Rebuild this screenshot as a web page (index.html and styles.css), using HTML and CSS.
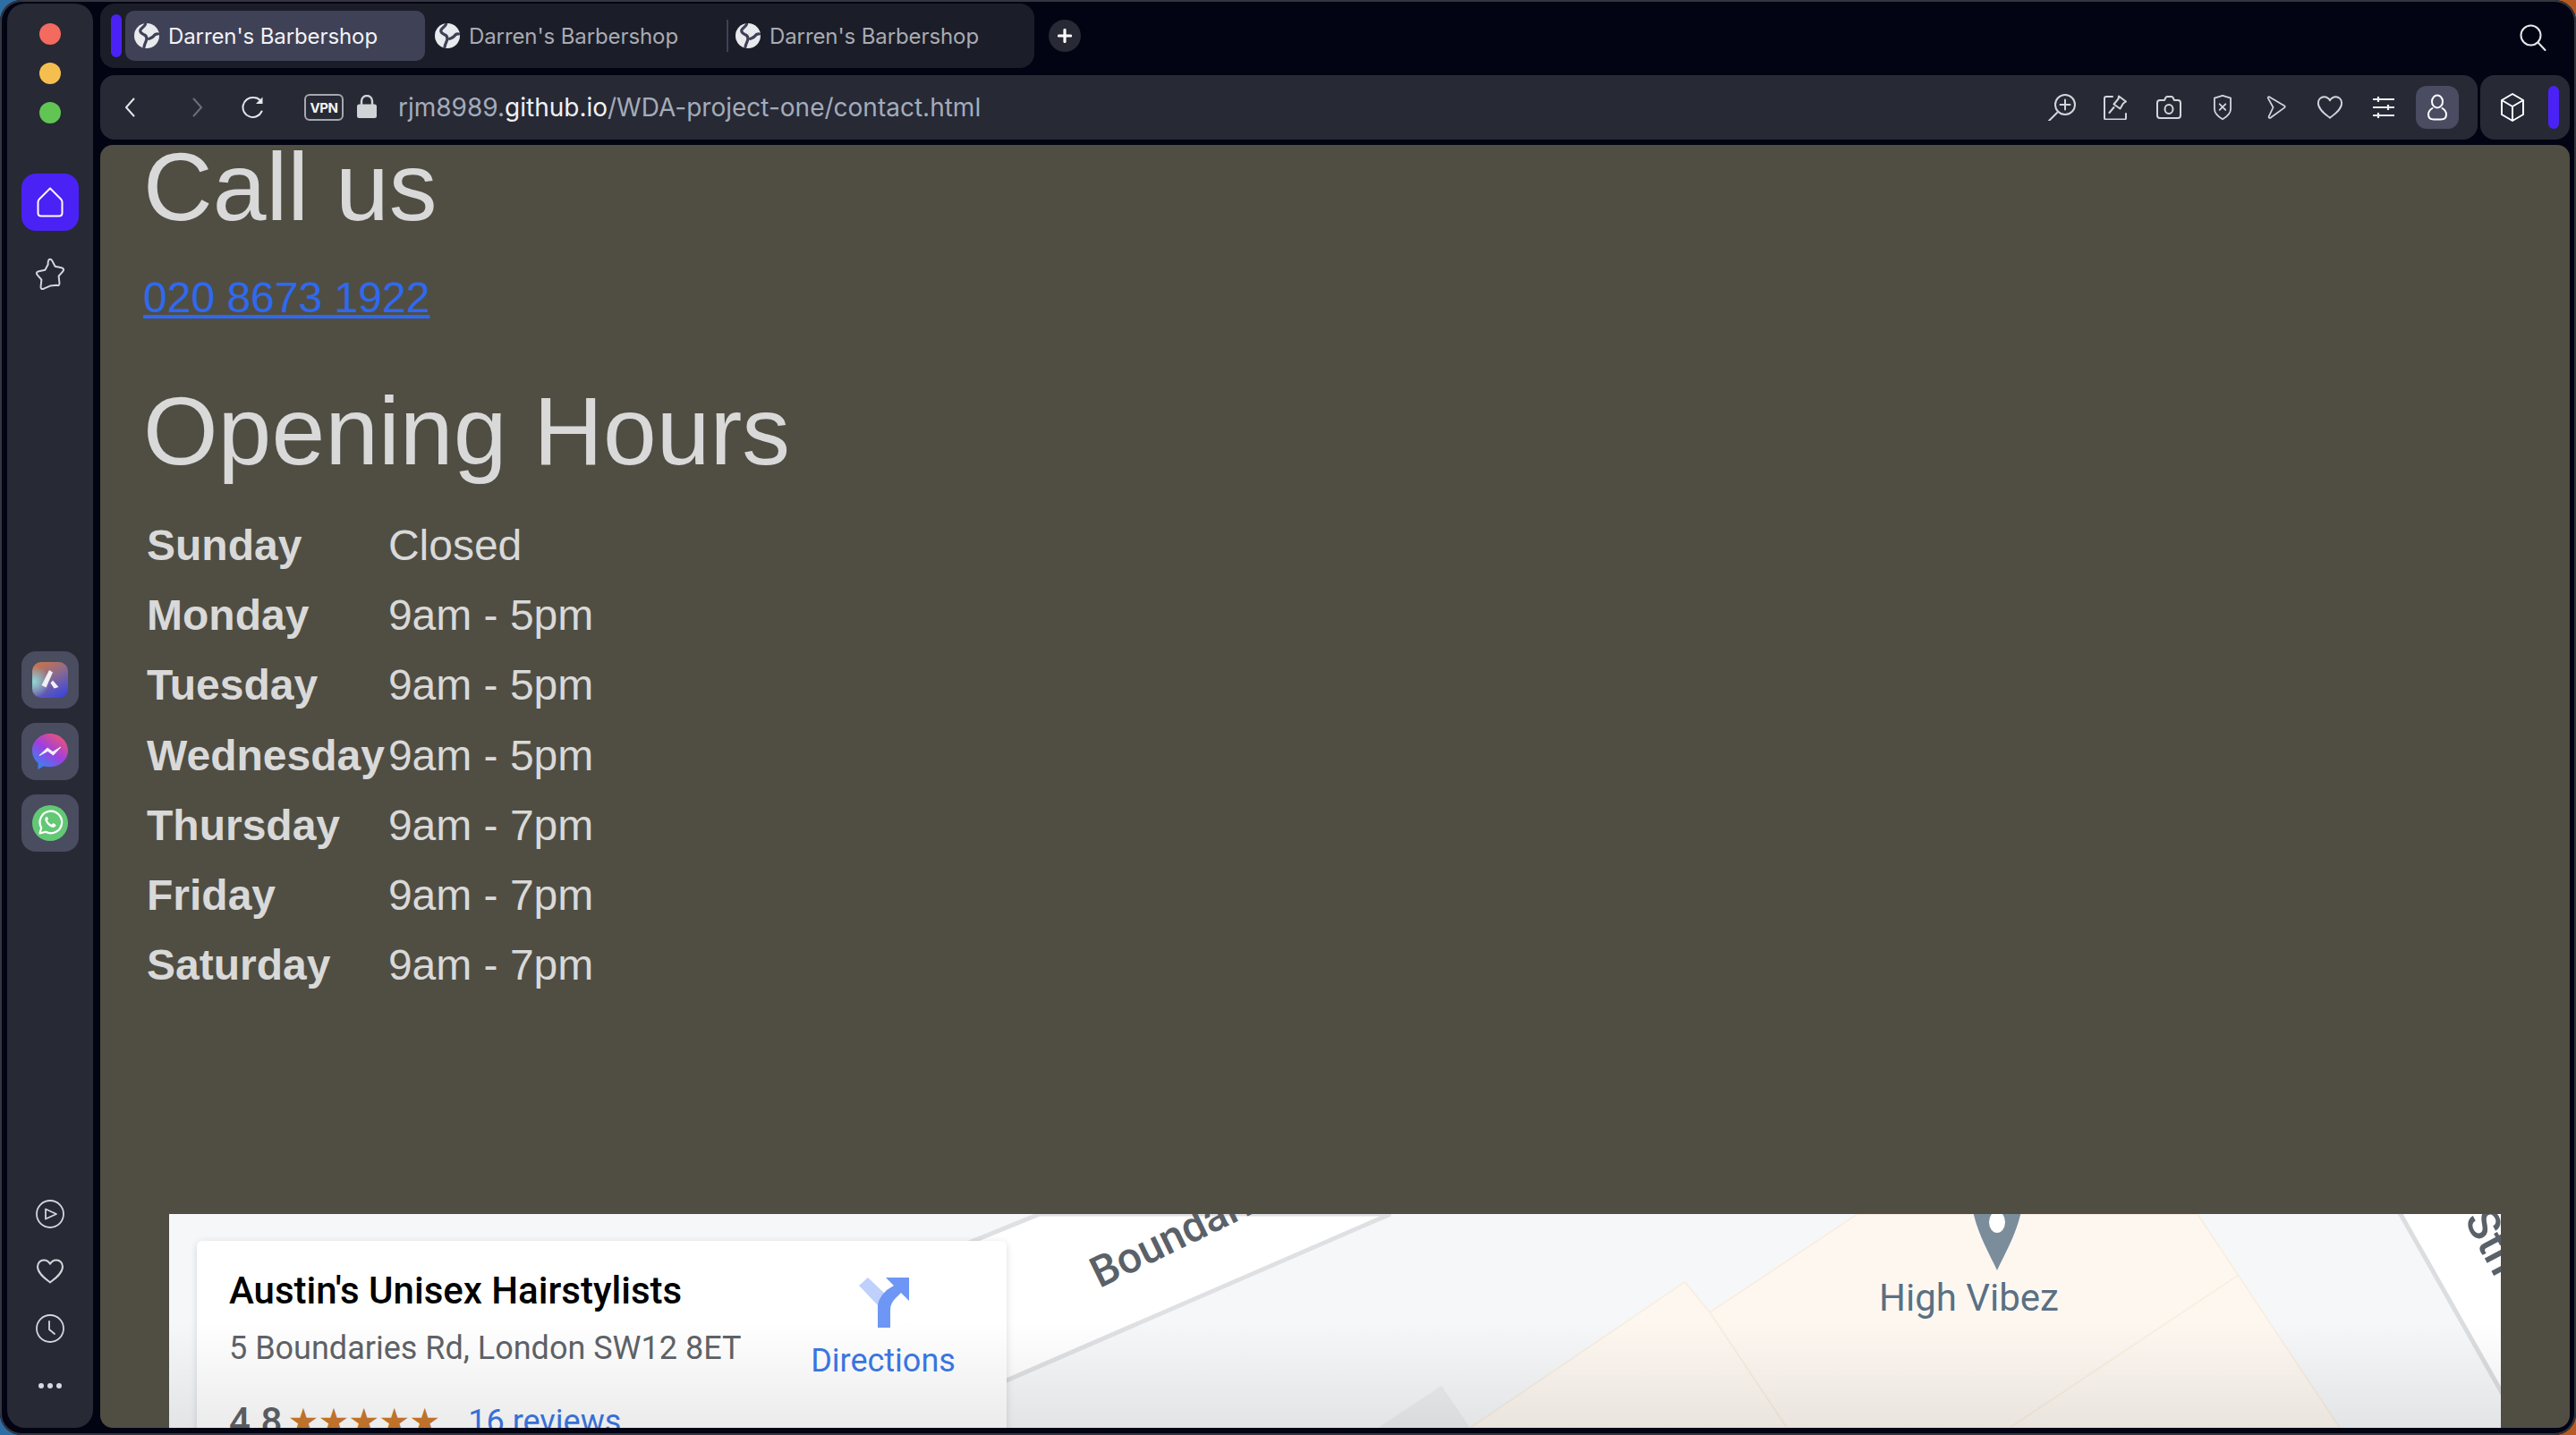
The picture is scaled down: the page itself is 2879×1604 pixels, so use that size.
FILE: index.html
```
<!DOCTYPE html>
<html lang="en">
<head>
<meta charset="utf-8">
<title>Darren's Barbershop</title>
<link rel="stylesheet" href="styles.css">
</head>
<body>
<svg class="defs" width="0" height="0" aria-hidden="true">
  <symbol id="globe" viewBox="0 0 28 28">
    <circle cx="14" cy="14" r="14" fill="#e9eaed"/>
    <path d="M12.500 1C11.500 4 7.500 5 6.800 8c-.6 3 2.700 4 4.700 5 2.200 1.200 2.700 3 2.200 5.500-.5 2.500-2 4-2.700 8" fill="none" stroke="#3f4156" stroke-width="3.200" stroke-linecap="round"/>
    <path d="M26.500 12c-2.500-.5-3.800.8-5 2.500-1.300 1.800-3.500 2-5 2.800" fill="none" stroke="#3f4156" stroke-width="3.200" stroke-linecap="round"/>
  </symbol>
  <symbol id="heart" viewBox="0 0 32 30">
    <path d="M16 27.500C11 23.500 2 17.500 2 9.800 2 5.400 5.300 2.500 9 2.500c3 0 5.500 1.600 7 4.300 1.500-2.700 4-4.300 7-4.300 3.700 0 7 2.900 7 7.300 0 7.700-9 13.700-14 17.700z" fill="none" stroke="currentColor" stroke-width="2" stroke-linejoin="round"/>
  </symbol>
</svg>

<div class="window">
  <aside class="sidebar">
    <div class="lights">
      <span class="light light-red"></span>
      <span class="light light-yellow"></span>
      <span class="light light-green"></span>
    </div>
    <div class="side-nav">
      <div class="home-btn">
        <svg width="30" height="34" viewBox="0 0 30 34"><path d="M15 1.500 27 13.500c1 1 1.500 2 1.500 3.300V29c0 2.200-1.500 3.500-3.500 3.500H5c-2 0-3.500-1.300-3.500-3.500V16.800c0-1.300.5-2.300 1.500-3.300z" fill="none" stroke="#fff" stroke-width="2" stroke-linejoin="round"/></svg>
      </div>
      <svg class="star" width="36" height="36" viewBox="0 0 36 36"><path d="M18 1.800c1 0 1.700.7 2.300 1.800l3.300 6.100 7 1.500c2.600.6 3.200 2.200 1.600 4.100l-4.600 5.400.8 7.300c.3 2.500-1.100 3.600-3.300 2.700L18 31.600l-7.100 3.100c-2.200.9-3.600-.2-3.300-2.700l.8-7.300-4.600-5.400c-1.600-1.900-1-3.500 1.600-4.100l7-1.500 3.300-6.100C15.300 2.500 17 1.800 18 1.800z" fill="none" stroke="#d4d5da" stroke-width="2" stroke-linejoin="round"/></svg>
    </div>
    <div class="side-apps">
      <div class="app-btn">
        <svg width="40" height="40" viewBox="0 0 40 40">
          <defs>
            <linearGradient id="ariaA" x1="0.2" y1="0" x2="0.7" y2="1"><stop offset="0" stop-color="#c9744a"/><stop offset=".45" stop-color="#8a6a8e"/><stop offset="1" stop-color="#3f48d8"/></linearGradient>
            <radialGradient id="ariaB" cx="0.05" cy="0.55" r="0.45"><stop offset="0" stop-color="#8fd8d8"/><stop offset="1" stop-color="#8fd8d8" stop-opacity="0"/></radialGradient>
          </defs>
          <rect width="40" height="40" rx="10" fill="url(#ariaA)"/>
          <rect width="40" height="40" rx="10" fill="url(#ariaB)"/>
          <path d="M19 9l4 2.500-7.500 17-5-2.500zM23 20.500l6.500 7.500-5 1.500-4-6z" fill="#f1f0f4"/>
        </svg>
      </div>
      <div class="app-btn">
        <svg width="40" height="40" viewBox="0 0 40 40">
          <defs><linearGradient id="msgr" x1="0.15" y1="1" x2="0.85" y2="0"><stop offset="0" stop-color="#2a8cf5"/><stop offset=".5" stop-color="#9d3fe0"/><stop offset="1" stop-color="#f2566c"/></linearGradient></defs>
          <path d="M20 0C9 0 0 8 0 19c0 5.600 2.400 10.500 6.500 13.900V40l6.500-3.700c2.200.6 4.500.9 7 .9 11 0 20-8 20-18.200S31 0 20 0z" fill="url(#msgr)"/>
          <path d="M8 24.500l9-8.500 6 4.500 9-5.500-8.500 9-6-4.500z" fill="#f2f2f6" stroke="#f2f2f6" stroke-linejoin="round"/>
        </svg>
      </div>
      <div class="app-btn">
        <svg width="40" height="40" viewBox="0 0 40 40">
          <circle cx="20" cy="20" r="20" fill="#62c873"/>
          <path d="M8.500 31.500l1.700-6.300a12.300 12.300 0 1 1 4.700 4.600z" fill="none" stroke="#fff" stroke-width="2.200" stroke-linejoin="round"/>
          <path d="M16 13c-1.200.4-2 2-1.500 3.800 1 3.500 4 6.800 7.800 8 1.800.5 3.500-.3 4-1.700.2-.7.200-1.200 0-1.400l-3-1.600-1.400 1.600c-2.400-1-4-2.600-5-4.800l1.200-1.300-1.300-2.600z" fill="#fff"/>
        </svg>
      </div>
    </div>
    <div class="side-tools">
      <svg width="32" height="32" viewBox="0 0 32 32"><circle cx="16" cy="16" r="15" fill="none" stroke="#d4d5da" stroke-width="1.800"/><path d="M11 10.500v11L23 16z" fill="none" stroke="#d4d5da" stroke-width="1.800" stroke-linejoin="round"/></svg>
      <svg class="tool-heart" width="32" height="30"><use href="#heart"/></svg>
      <svg width="32" height="32" viewBox="0 0 32 32"><circle cx="16" cy="16" r="15" fill="none" stroke="#d4d5da" stroke-width="1.800"/><path d="M15 8v9l6 5" fill="none" stroke="#d4d5da" stroke-width="1.800" stroke-linecap="round"/></svg>
      <div class="dots"><span></span><span></span><span></span></div>
    </div>
  </aside>

  <div class="main">
    <div class="tab-row">
      <div class="tab-strip">
        <span class="accent"></span>
        <div class="tab tab-active"><svg class="globe" width="28" height="28"><use href="#globe"/></svg><span>Darren's Barbershop</span></div>
        <div class="tab"><svg class="globe" width="28" height="28"><use href="#globe"/></svg><span>Darren's Barbershop</span></div>
        <div class="tab tab-sep"><svg class="globe" width="28" height="28"><use href="#globe"/></svg><span>Darren's Barbershop</span></div>
      </div>
      <div class="new-tab"><svg width="16" height="16" viewBox="0 0 16 16"><path d="M8 1.500v13M1.500 8h13" stroke="#fff" stroke-width="3.200" stroke-linecap="round"/></svg></div>
      <svg class="search" width="30" height="30" viewBox="0 0 30 30"><circle cx="12.500" cy="12.500" r="11" fill="none" stroke="#e6e7ea" stroke-width="2"/><path d="M20.500 20.500 28.500 29" stroke="#e6e7ea" stroke-width="2" stroke-linecap="round"/></svg>
    </div>

    <div class="bar-row">
      <div class="address">
        <svg class="nav-back" width="12" height="22" viewBox="0 0 12 22"><path d="M10.500 1.500 2 11l8.500 9.500" fill="none" stroke="#e4e5e8" stroke-width="2" stroke-linecap="round" stroke-linejoin="round"/></svg>
        <svg class="nav-fwd" width="12" height="22" viewBox="0 0 12 22"><path d="M1.500 1.500 10 11l-8.500 9.500" fill="none" stroke="#6d6e76" stroke-width="2" stroke-linecap="round" stroke-linejoin="round"/></svg>
        <svg class="nav-reload" width="26" height="26" viewBox="0 0 26 26"><path d="M22.500 17.500A11 11 0 1 1 13.500 2c3 0 5.500 1.200 7.500 3.200" fill="none" stroke="#e6e7ea" stroke-width="2" stroke-linecap="round"/><path d="M23.500 1.500v7.500H16z" fill="#e6e7ea"/></svg>
        <span class="vpn">VPN</span>
        <svg class="lock" width="22" height="26" viewBox="0 0 22 26"><path d="M5 12V7a6 6 0 0 1 12 0v5" fill="none" stroke="#d2d3d6" stroke-width="2.400"/><rect y="10.500" width="22" height="15.500" rx="2.500" fill="#d2d3d6"/></svg>
        <div class="url"><span class="url-dim">rjm8989.</span><span class="url-host">github.io</span><span class="url-dim">/WDA-project-one/contact.html</span></div>
        <div class="bar-icons">
          <svg width="34" height="30" viewBox="0 0 34 30"><circle cx="21" cy="12" r="11" fill="none" stroke="#d4d5da" stroke-width="2"/><path d="M21 6.500v11M15.500 12h11" stroke="#d4d5da" stroke-width="2" stroke-linecap="round"/><path d="M12 21 3 30" stroke="#d4d5da" stroke-width="2" stroke-linecap="round"/></svg>
          <svg width="26" height="28" viewBox="0 0 26 28"><path d="M10 2H3C2 2 1 3 1 4v22c0 1 1 1.500 2 1.500h20c1 0 2-.5 2-1.500v-5" fill="none" stroke="#d4d5da" stroke-width="2" stroke-linecap="round"/><path d="M17 1.500l8 6-3 2-3.500 6-7-5 5-6zM11.500 14 6.500 20" fill="none" stroke="#d4d5da" stroke-width="2" stroke-linejoin="round" stroke-linecap="round"/></svg>
          <svg width="28" height="26" viewBox="0 0 28 26"><path d="M9 5l1.500-3c.3-.6.8-1 1.500-1h5c.7 0 1.200.4 1.500 1L20 5h4c2 0 3 1.300 3 3v14c0 2-1 3-3 3H4c-2 0-3-1-3-3V8c0-1.700 1-3 3-3z" fill="none" stroke="#d4d5da" stroke-width="2" stroke-linejoin="round"/><ellipse cx="14" cy="15" rx="4.500" ry="5" fill="none" stroke="#d4d5da" stroke-width="2"/></svg>
          <svg width="24" height="28" viewBox="0 0 24 34"><path d="M12 1l11 3.500V19c0 6-5 10.500-11 14C6 29.500 1 25 1 19V4.500z" fill="none" stroke="#d4d5da" stroke-width="2.200" stroke-linejoin="round"/><path d="M8 12.500l8 8M16 12.500l-8 8" stroke="#d4d5da" stroke-width="2.200" stroke-linecap="round"/></svg>
          <svg width="24" height="26" viewBox="0 0 24 30"><path d="M3 1.500 22.500 13c1 .7 1 1.700 0 2.400L4.500 28.500c-1.400.7-2.600-.4-2-1.700L8 15 1.500 3.300C1 2 2 1 3 1.500z" fill="none" stroke="#d4d5da" stroke-width="2" stroke-linejoin="round"/></svg>
          <svg class="bar-heart" width="30" height="30"><use href="#heart"/></svg>
          <svg width="26" height="24" viewBox="0 0 26 24"><path d="M1 3h24M1 12h24M1 21h24" stroke="#f0f0f2" stroke-width="2.200"/><path d="M7 0v6M18 9v6M7 18v6" stroke="#f0f0f2" stroke-width="2.200"/></svg>
          <div class="user-btn"><svg width="22" height="30" viewBox="0 0 22 30"><ellipse cx="11" cy="8.500" rx="6" ry="7" fill="none" stroke="#fff" stroke-width="2"/><path d="M5.500 16C3 17.500 1 19.500 1 23c0 4 3 5.500 6 5.500h8c3 0 6-1.500 6-5.500 0-3.500-2-5.500-4.500-7" fill="none" stroke="#fff" stroke-width="2" stroke-linecap="round"/></svg></div>
        </div>
      </div>
      <div class="ext-box">
        <svg width="26" height="32" viewBox="0 0 26 32"><path d="M13 1l12 7v16l-12 7-12-7V8zM1 8l12 7 12-7M13 15v16" fill="none" stroke="#fff" stroke-width="2" stroke-linejoin="round"/></svg>
        <span class="ext-accent"></span>
      </div>
    </div>

    <main class="content">
      <h1 class="call">Call us</h1>
      <p class="phone"><a href="#">020 8673 1922</a></p>
      <h2 class="hours-title">Opening Hours</h2>
      <table class="hours">
        <tr><th>Sunday</th><td>Closed</td></tr>
        <tr><th>Monday</th><td>9am - 5pm</td></tr>
        <tr><th>Tuesday</th><td>9am - 5pm</td></tr>
        <tr><th>Wednesday</th><td>9am - 5pm</td></tr>
        <tr><th>Thursday</th><td>9am - 7pm</td></tr>
        <tr><th>Friday</th><td>9am - 7pm</td></tr>
        <tr><th>Saturday</th><td>9am - 7pm</td></tr>
      </table>

      <section class="map">
        <svg class="map-art" width="2606" height="450" viewBox="0 0 2606 450">
          <polygon points="1887,0 2267,0 2426,239 1808,239 1722,110" fill="#fdf7f0" stroke="#f9ecdd" stroke-width="1.500"/>
          <polygon points="1694,76 1722,110 1808,239 1454,239" fill="#fdf7f0" stroke="#f9ecdd" stroke-width="1.500"/>
          <path d="M2313 68 2057 239" fill="none" stroke="#f9ecdd" stroke-width="1.500"/>
          <polygon points="1422,192 1351,239 1454,239" fill="#ecedee"/>
          <polygon points="973,0 1365,0 500,375 500,192" fill="#fff" stroke="#dfe0e3" stroke-width="5"/>
          <polygon points="2491,-5 2640,-5 2640,260 2630,240" fill="#fff" stroke="#dcdde0" stroke-width="5"/>
          <path d="M2012 -40h62c0 48-18 75-31 103-13-28-31-55-31-103z" fill="#7b8d9b"/>
          <ellipse cx="2043" cy="9" rx="9" ry="12" fill="#fff"/>
        </svg>
        <span class="road-label">Boundaries Rd</span>
        <span class="road-label-2">Sth</span>
        <span class="poi">High Vibez</span>
        <div class="place-card">
          <div class="place-info">
            <div class="place-name">Austin's Unisex Hairstylists</div>
            <div class="place-addr">5 Boundaries Rd, London SW12 8ET</div>
            <div class="place-rating">
              <span class="score">4.8</span>
              <span class="stars">★★★★★</span>
              <a class="reviews" href="#">16 reviews</a>
            </div>
          </div>
          <div class="directions">
            <svg width="58" height="56" viewBox="0 0 58 56"><polygon points="2,9 12,0 33,20 24,32" fill="#bed0fb"/><path d="M23 56V33c0-8 5-14 10-19l8-5-9-9h26v26l-9-9-6 6c-4 4-6 8-6 13v20z" fill="#6d96f5"/></svg>
            <a href="#">Directions</a>
          </div>
        </div>
        <div class="map-fade"></div>
      </section>
    </main>
  </div>
</div>
</body>
</html>
```
FILE: styles.css
```
* { box-sizing: border-box; }
html, body { margin: 0; padding: 0; }
body {
  width: 2879px;
  height: 1604px;
  overflow: hidden;
  background: linear-gradient(90deg, #2f6ea5 0%, #2a5f96 50%, #b85a24 100%);
}
.defs { position: absolute; }

.window {
  width: 2879px;
  height: 1604px;
  display: flex;
  gap: 8px;
  padding: 4px 7px 8px 8px;
  background: #020414;
  border-radius: 24px;
  box-shadow: inset 0 0 0 2px #34363f;
  font-family: Inter, "Liberation Sans", sans-serif;
}

/* sidebar */
.sidebar {
  width: 96px;
  flex: none;
  display: flex;
  flex-direction: column;
  align-items: center;
  background: #272935;
  border-radius: 20px;
}
.lights { display: flex; flex-direction: column; gap: 20px; padding-top: 22px; }
.light { display: block; width: 24px; height: 24px; border-radius: 50%; }
.light-red { background: #f26b5e; }
.light-yellow { background: #f5bf4f; }
.light-green { background: #61c554; }
.side-nav { display: flex; flex-direction: column; align-items: center; margin-top: 56px; gap: 30px; }
.home-btn {
  width: 64px; height: 64px;
  display: flex; align-items: center; justify-content: center;
  background: #4a22f5;
  border-radius: 16px;
}
.side-apps { display: flex; flex-direction: column; gap: 16px; margin-top: 404px; }
.app-btn {
  width: 64px; height: 64px;
  display: flex; align-items: center; justify-content: center;
  background: #4a4c60;
  border-radius: 16px;
}
.side-tools {
  margin-top: auto;
  padding-bottom: 44px;
  display: flex;
  flex-direction: column;
  align-items: center;
  gap: 32px;
  color: #d4d5da;
}
.tool-heart { margin: 1px 0; }
.dots { display: flex; gap: 4px; margin-top: -19px; padding-top: 32px; }
.dots span { width: 6px; height: 6px; border-radius: 50%; background: #d8d9de; }

/* main column */
.main { flex: 1; min-width: 0; display: flex; flex-direction: column; }
.tab-row { height: 72px; display: flex; align-items: center; flex: none; }
.tab-strip {
  width: 1044px; height: 72px;
  display: flex; align-items: center;
  background: #1b1d28;
  border-radius: 16px;
  padding-left: 12px;
}
.accent { width: 12px; height: 48px; background: #4a22f5; border-radius: 6px; margin-right: 4px; flex: none; }
.tab {
  width: 336px; height: 56px; flex: none;
  display: flex; align-items: center; gap: 10px;
  padding-left: 10px;
  color: #a9abb2;
  font-size: 24px;
  letter-spacing: -0.1px;
  border-radius: 10px;
  position: relative;
}
.tab-active { background: #3f4156; color: #f2f2f5; width: 335px; margin-right: 1px; }
.tab-sep::before {
  content: "";
  position: absolute;
  left: 0; top: 10px;
  width: 2px; height: 36px;
  background: #3f4156;
}
.globe { flex: none; color: #e9eaed; }
.new-tab {
  width: 36px; height: 36px; margin-left: 16px;
  display: flex; align-items: center; justify-content: center;
  background: #272935; border-radius: 50%;
}
.search { margin-left: auto; margin-right: 26px; margin-top: 4px; }

.bar-row { display: flex; gap: 3px; height: 72px; margin-top: 8px; flex: none; }
.address {
  flex: 1; min-width: 0;
  display: flex; align-items: center;
  background: #272935;
  border-radius: 16px;
  padding-left: 27px;
}
.nav-fwd { margin-left: 64px; }
.nav-reload { margin-left: 43px; }
.vpn {
  margin-left: 44px;
  width: 44px; height: 30px;
  display: flex; align-items: center; justify-content: center;
  border: 2px solid #a6a8ae;
  border-radius: 6px;
  color: #f2f2f5;
  font-size: 15px; font-weight: 700;
  letter-spacing: -0.5px;
}
.lock { margin-left: 15px; margin-top: -2px; }
.url { margin-left: 24px; font-size: 28px; white-space: nowrap; }
.url-dim { color: #a3acba; }
.url-host { color: #f0f1f3; }
.bar-icons {
  margin-left: auto;
  display: grid;
  grid-template-columns: repeat(7, 60px) 54px;
  justify-items: center;
  align-items: center;
  color: #d4d5da;
  padding-right: 21px;
}
.bar-heart { color: #d4d5da; }
.user-btn {
  width: 48px; height: 48px;
  justify-self: end;
  display: flex; align-items: center; justify-content: center;
  background: #4a4c62;
  border-radius: 12px;
}
.ext-box {
  width: 100px; flex: none;
  display: flex; align-items: center;
  background: #272935;
  border-radius: 16px;
  padding-left: 23px;
}
.ext-accent { width: 12px; height: 48px; background: #4a22f5; border-radius: 6px; margin-left: 27px; }

/* page content */
.content {
  margin-top: 6px;
  flex: 1;
  min-height: 0;
  overflow: hidden;
  background: #504e43;
  border-radius: 14px;
  padding-left: 48px;
  color: #d9d9d9;
  font-family: "Liberation Sans", Arial, sans-serif;
}
.call { margin: 0; font-size: 107.500px; line-height: 94px; font-weight: 400; }
.phone { margin: 49px 0 0; font-size: 48px; line-height: 55px; }
.phone a { color: #2f69f0; }
.hours-title { margin: 68px 0 0; font-size: 107.500px; line-height: 108px; font-weight: 400; }
.hours { margin-top: 32px; border-collapse: separate; border-spacing: 4px; font-size: 48px; }
.hours tr { height: 74.3px; }
.hours th, .hours td { padding: 0; line-height: 55px; text-align: left; }
.hours th { font-weight: 700; }

/* map */
.map {
  position: relative;
  margin: 237px 0 0 29px;
  width: 2606px;
  height: 450px;
  background: #f6f7f9;
  overflow: hidden;
  font-family: Roboto, "Liberation Sans", sans-serif;
}
.map-art { display: block; }
.road-label {
  position: absolute;
  left: 1045px; top: 37px;
  font-size: 48px; font-weight: 500;
  color: #5a6168;
  white-space: nowrap;
  transform: rotate(-26deg);
  transform-origin: left bottom;
}
.road-label-2 {
  position: absolute;
  left: 2605px; top: -16px;
  font-size: 50px; font-weight: 500;
  color: #5a6168;
  transform: rotate(62deg);
  transform-origin: left top;
}
.poi {
  position: absolute;
  left: 1911px; top: 69px;
  font-size: 42px;
  color: #5b7083;
  text-shadow: 0 0 3px #fff;
  white-space: nowrap;
}
.place-card {
  position: absolute;
  left: 31px; top: 30px;
  width: 905px; height: 400px;
  background: #fff;
  border-radius: 6px;
  box-shadow: 0 2px 8px rgba(0,0,0,.14);
  display: flex;
  padding: 31px 52px 0 36px;
}
.place-info { flex: 1; min-width: 0; }
.place-name { font-size: 42px; font-weight: 500; line-height: 50px; color: #000; white-space: nowrap; }
.place-addr { margin-top: 15px; font-size: 36px; line-height: 48px; color: #5f6368; white-space: nowrap; }
.place-rating { margin-top: 34px; display: flex; align-items: center; font-size: 42px; font-weight: 500; color: #5f6368; line-height: 48px; white-space: nowrap; }
.score { margin-right: 6px; }
.stars { color: #cc7a2d; font-size: 39px; letter-spacing: -1px; font-family: "DejaVu Sans", sans-serif; }
.reviews { margin-left: 32px; color: #3b78e7; font-size: 36px; font-weight: 400; text-decoration: none; }
.directions { width: 172px; flex: none; display: flex; flex-direction: column; align-items: center; margin-top: 10px; }
.directions a { margin-top: 13px; color: #3b78e7; font-size: 36px; line-height: 48px; text-decoration: none; white-space: nowrap; }
.map-fade {
  position: absolute;
  left: 0; right: 0; top: 120px; height: 120px;
  background: linear-gradient(180deg, rgba(0,0,0,0), rgba(0,0,0,.08));
  pointer-events: none;
}
```
